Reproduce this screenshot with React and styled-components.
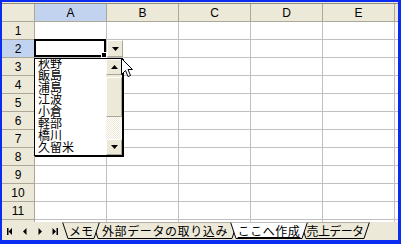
import React from 'react';
import styled, {createGlobalStyle} from 'styled-components';

const GlobalStyle = createGlobalStyle`
  html, body { margin: 0; padding: 0; }
  body { font-family: "Noto Sans CJK JP", sans-serif; }
`;

const columns = ['A', 'B', 'C', 'D', 'E', 'F'];
const rowCount = 12;
const names = ['秋野', '飯島', '浦島', '江波', '小倉', '軽部', '橋川', '久留米'];
const sheets = [
    {label: 'メモ', width: 38, spacing: 0},
    {label: '外部データの取り込み', width: 146, spacing: 0.6},
    {label: 'ここへ作成', width: 78, spacing: 0.5},
    {label: '売上データ', width: 70, spacing: -0.6},
];
const activeSheet = 2;
const SLANT = 6;
const TAB_H = 17;

const Frame = styled.div`
  width: 401px;
  height: 244px;
  box-sizing: border-box;
  background: #0a2bf0;
  padding: 2px 3px 4px 2px;
  overflow: hidden;
`;

const Window = styled.div`
  height: 100%;
  box-sizing: border-box;
  padding-top: 1px;
  background: #ece9d8;
  display: flex;
  flex-direction: column;
`;

const Sheet = styled.div`
  flex: 1;
  overflow: hidden;
  position: relative;
  border-top: 1px solid #8f8d82;
  display: grid;
  grid-template-columns: 33px repeat(6, 72px);
  grid-auto-rows: 18px;
  background: #fff;
`;

const Header = styled.div`
  box-sizing: border-box;
  background: ${(p) => (p.$selected ? '#c1d3ef' : '#ece9d8')};
  border-right: 1px solid #aca899;
  border-bottom: 1px solid #aca899;
  display: flex;
  align-items: center;
  justify-content: center;
  font: 12px "Liberation Sans", sans-serif;
  color: #000;
`;

const Cell = styled.div`
  box-sizing: border-box;
  position: relative;
  border-right: 1px solid #c0c0c0;
  border-bottom: 1px solid #c0c0c0;
`;

const ActiveFrame = styled.div`
  position: absolute;
  top: -1px;
  left: -1px;
  right: 0;
  bottom: 0;
  border: 2px solid #000;
  pointer-events: none;
`;

const FillHandle = styled.div`
  position: absolute;
  right: -3px;
  bottom: -3px;
  width: 4px;
  height: 4px;
  background: #000;
  border: 1px solid #fff;
`;

const DropButton = styled.div`
  position: absolute;
  top: 0;
  left: calc(100% + 1px);
  width: 16px;
  height: 17px;
  box-sizing: border-box;
  background: #ece9d8;
  border: 1px solid;
  border-color: #fff #aca899 #aca899 #fff;
  display: flex;
  align-items: center;
  justify-content: center;
  z-index: 3;
`;

const ListBox = styled.div`
  position: absolute;
  top: calc(100% + 1px);
  left: -1px;
  width: 89px;
  height: 98px;
  box-sizing: border-box;
  border: 1px solid #000;
  box-shadow: 1px 1px 0 #000;
  background: #fff;
  display: flex;
  z-index: 3;
`;

const Items = styled.div`
  flex: 1;
  overflow: hidden;
`;

const ItemColumn = styled.div`
  margin-top: -2px;
  padding-left: 3px;
`;

const Item = styled.div`
  height: 12px;
  line-height: 12px;
  font-size: 12px;
  color: #000;
  white-space: nowrap;
`;

const ScrollBar = styled.div`
  width: 16px;
  display: flex;
  flex-direction: column;
  background: #ece9d8;
`;

const ScrollButton = styled.div`
  height: 16px;
  box-sizing: border-box;
  background: #ece9d8;
  border: 1px solid;
  border-color: #fff #aca899 #aca899 #fff;
  display: flex;
  align-items: center;
  justify-content: center;
`;

const Thumb = styled.div`
  margin-top: 2px;
  height: 40px;
  box-sizing: border-box;
  background: #ece9d8;
  border: 1px solid;
  border-color: #fff #aca899 #aca899 #fff;
`;

const Track = styled.div`
  flex: 1;
  background: repeating-conic-gradient(#ece9d8 0 25%, #fff 0 50%) 0 0 / 2px 2px;
`;

const Cursor = styled.svg`
  position: absolute;
  left: 119px;
  top: 54px;
  z-index: 5;
`;

const TabBar = styled.div`
  height: 18px;
  display: flex;
  background: #ece9d8;
`;

const Nav = styled.div`
  width: 60px;
  display: flex;
`;

const NavButton = styled.div`
  width: 15px;
  display: flex;
  align-items: center;
  justify-content: center;
`;

const Tabs = styled.div`
  display: flex;
`;

const Tab = styled.div`
  position: relative;
  z-index: ${(p) => p.$z};
  width: ${(p) => p.$w}px;
  height: ${TAB_H}px;
  flex-shrink: 0;
  & + & {
    margin-left: -8px;
  }
`;

const TabShape = styled.svg`
  position: absolute;
  inset: 0;
`;

const TabLabel = styled.span`
  position: relative;
  display: flex;
  height: 100%;
  align-items: center;
  justify-content: center;
  font-size: 12px;
  line-height: 12px;
  letter-spacing: ${(p) => p.$spacing}px;
  color: #000;
  text-decoration: ${(p) => (p.$active ? 'underline' : 'none')};
  text-underline-offset: 1px;
  white-space: nowrap;
`;

const Arrow = ({dir}) => (
    <svg width="7" height="4" viewBox="0 0 7 4">
        <polygon points={dir === 'up' ? '3.5,0 7,4 0,4' : '0,0 7,0 3.5,4'} fill="#000"/>
    </svg>
);

const NavIcon = ({kind}) => (
    <svg width="6" height="7" viewBox="0 0 6 7">
        {kind === 'first' && <><rect x="0" y="0" width="1.5" height="7"/><polygon points="5,0 5,7 1.5,3.5"/></>}
        {kind === 'prev' && <polygon points="4.5,0 4.5,7 1,3.5"/>}
        {kind === 'next' && <polygon points="1.5,0 1.5,7 5,3.5"/>}
        {kind === 'last' && <><polygon points="0.5,0 0.5,7 4,3.5"/><rect x="4.5" y="0" width="1.5" height="7"/></>}
    </svg>
);

const SheetTab = ({label, width, spacing, index}) => {
    const active = index === activeSheet;
    const z = active ? 20 : 10 - index;
    const pts = `0.5,0 ${width - 0.5},0 ${width - SLANT},${TAB_H - 0.5} ${SLANT},${TAB_H - 0.5}`;
    return (
        <Tab $w={width} $z={z}>
            <TabShape width={width} height={TAB_H}>
                <polygon points={pts} fill={active ? '#fff' : '#ece9d8'} stroke="#000" strokeWidth="1"/>
                <line x1="0" y1="0" x2={width} y2="0" stroke={active ? '#fff' : '#ece9d8'} strokeWidth="1"/>
            </TabShape>
            <TabLabel $active={active} $spacing={spacing}>{label}</TabLabel>
        </Tab>
    );
};

const DropDown = () => (
    <>
        <ActiveFrame><FillHandle/></ActiveFrame>
        <DropButton><Arrow dir="down"/></DropButton>
        <ListBox>
            <Items>
                <ItemColumn>
                    {names.map((n) => <Item key={n}>{n}</Item>)}
                </ItemColumn>
            </Items>
            <ScrollBar>
                <ScrollButton><Arrow dir="up"/></ScrollButton>
                <Thumb/>
                <Track/>
                <ScrollButton><Arrow dir="down"/></ScrollButton>
            </ScrollBar>
        </ListBox>
    </>
);

export default function App() {
    const rows = Array.from({length: rowCount}, (_, i) => i + 1);
    return (
        <>
            <GlobalStyle/>
            <Frame>
                <Window>
                    <Sheet>
                        <Header/>
                        {columns.map((c) => <Header key={c} $selected={c === 'A'}>{c}</Header>)}
                        {rows.map((r) => (
                            <React.Fragment key={r}>
                                <Header $selected={r === 2}>{r}</Header>
                                {columns.map((c) => (
                                    <Cell key={c}>
                                        {r === 2 && c === 'A' && <DropDown/>}
                                    </Cell>
                                ))}
                            </React.Fragment>
                        ))}
                        <Cursor width="12" height="20" viewBox="0 0 12 20">
                            <polygon points="0.5,0.5 0.5,16.5 4.5,12.5 7,18.5 9.5,17.5 7,11.5 11.5,11.5" fill="#fff" stroke="#000" strokeWidth="1"/>
                        </Cursor>
                    </Sheet>
                    <TabBar>
                        <Nav>
                            {['first', 'prev', 'next', 'last'].map((k) => (
                                <NavButton key={k}><NavIcon kind={k}/></NavButton>
                            ))}
                        </Nav>
                        <Tabs>
                            {sheets.map((s, i) => <SheetTab key={s.label} {...s} index={i}/>)}
                        </Tabs>
                    </TabBar>
                </Window>
            </Frame>
        </>
    );
}
